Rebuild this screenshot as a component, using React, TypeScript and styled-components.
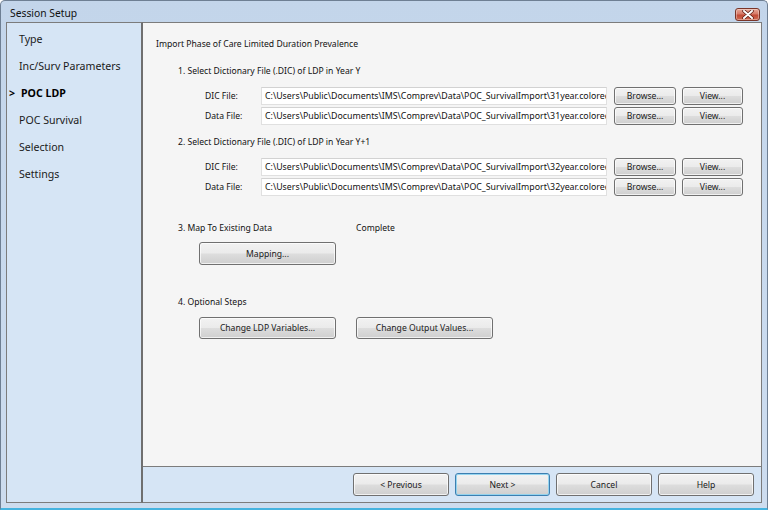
import React from "react";
import styled, { createGlobalStyle, css } from "styled-components";

const GlobalStyle = createGlobalStyle`
  html, body {
    margin: 0;
    padding: 0;
    overflow: hidden;
    background: #ffffff;
  }
  * {
    box-sizing: border-box;
  }
`;

const FONT = `"Noto Sans", "Open Sans", "DejaVu Sans", sans-serif`;

const navItems = [
  "Type",
  "Inc/Surv Parameters",
  "POC LDP",
  "POC Survival",
  "Selection",
  "Settings",
];

const yearY =
  "C:\\Users\\Public\\Documents\\IMS\\Comprev\\Data\\POC_SurvivalImport\\31year.colored";
const yearY1 =
  "C:\\Users\\Public\\Documents\\IMS\\Comprev\\Data\\POC_SurvivalImport\\32year.colored";

function FileRow({ label, value }: { label: string; value: string }) {
  return (
    <Row>
      <FieldLabel>{label}</FieldLabel>
      <PathBox>{value}</PathBox>
      <Button $w={62}>Browse...</Button>
      <Button $w={61}>View...</Button>
    </Row>
  );
}

function App() {
  return (
    <>
      <GlobalStyle />
      <Window>
        <TitleBar>
          <Title>Session Setup</Title>
          <CloseButton>
            <svg width="12" height="9" viewBox="0 0 12 9">
              <path
                d="M2 1 L10 8 M10 1 L2 8"
                stroke="#5a1a12"
                strokeWidth="3.4"
                strokeLinecap="round"
              />
              <path
                d="M2 1 L10 8 M10 1 L2 8"
                stroke="#ffffff"
                strokeWidth="2"
                strokeLinecap="round"
              />
            </svg>
          </CloseButton>
        </TitleBar>
        <Body>
          <Nav>
            {navItems.map((item) => (
              <NavItem key={item} $active={item === "POC LDP"}>
                {item === "POC LDP" && <Marker>&gt;</Marker>}
                {item}
              </NavItem>
            ))}
          </Nav>
          <Main>
            <Content>
              <Heading>Import Phase of Care Limited Duration Prevalence</Heading>

              <Step $top={14}>1. Select Dictionary File (.DIC) of LDP in Year Y</Step>
              <FileGroup>
                <FileRow label="DIC File:" value={yearY} />
                <FileRow label="Data File:" value={yearY} />
              </FileGroup>

              <Step $top={11}>2. Select Dictionary File (.DIC) of LDP in Year Y+1</Step>
              <FileGroup>
                <FileRow label="DIC File:" value={yearY1} />
                <FileRow label="Data File:" value={yearY1} />
              </FileGroup>

              <Step $top={26}>
                <StepName>3. Map To Existing Data</StepName>
                Complete
              </Step>
              <ActionRow $top={7}>
                <Button $w={137} $h={23}>
                  Mapping...
                </Button>
              </ActionRow>

              <Step $top={31}>4. Optional Steps</Step>
              <ActionRow $top={8}>
                <Button $w={137} $h={22}>
                  Change LDP Variables...
                </Button>
                <Button $w={137} $h={22}>
                  Change Output Values...
                </Button>
              </ActionRow>
            </Content>
            <Footer>
              <Button $w={96} $h={23}>&lt; Previous</Button>
              <Button $w={95} $h={23} $default>
                Next &gt;
              </Button>
              <Button $w={96} $h={23}>Cancel</Button>
              <Button $w={96} $h={23}>Help</Button>
            </Footer>
          </Main>
        </Body>
      </Window>
    </>
  );
}

export default App;

const Window = styled.div`
  width: 768px;
  height: 510px;
  display: flex;
  flex-direction: column;
  border: 1px solid #6e7f93;
  border-bottom: 2px solid #45b3df;
  border-radius: 5px 5px 0 0;
  background: linear-gradient(to bottom, #c3d5ea, #c9daee 60%, #cddcee);
  font-family: ${FONT};
  color: #000;
  overflow: hidden;
`;

const TitleBar = styled.div`
  height: 21px;
  flex: none;
  display: flex;
  align-items: center;
  justify-content: space-between;
  padding: 0 7px 0 9px;
`;

const Title = styled.span`
  font-size: 10.3px;
  color: #111;
  padding-top: 3px;
`;

const CloseButton = styled.div`
  width: 25px;
  height: 13px;
  margin-top: 5px;
  display: flex;
  align-items: center;
  justify-content: center;
  border: 1px solid #7a3528;
  border-radius: 3px;
  background: linear-gradient(to bottom, #e8a898 0%, #d67a68 45%, #c24a36 55%, #cf6a52 100%);
  box-shadow: inset 0 0 0 1px rgba(255, 255, 255, 0.35);
`;

const Body = styled.div`
  flex: 1;
  display: flex;
  padding: 0 5px 5px 5px;
  min-height: 0;
`;

const Nav = styled.div`
  width: 137px;
  flex: none;
  background: #d6e5f5;
  border: 1px solid #7c7c7c;
  border-right: 2px solid #6f6f6f;
  padding-top: 2px;
`;

const NavItem = styled.div<{ $active?: boolean }>`
  height: 27px;
  display: flex;
  align-items: center;
  padding-left: 12px;
  font-size: 10.6px;
  color: #1a1a1a;
  ${(p) =>
    p.$active &&
    css`
      padding-left: 2px;
      font-weight: 700;
      color: #000;
    `}
`;

const Marker = styled.span`
  display: inline-block;
  width: 12px;
  font-weight: 700;
`;

const Main = styled.div`
  flex: 1;
  display: flex;
  flex-direction: column;
  border-top: 1px solid #7c7c7c;
  border-right: 1px solid #7c7c7c;
  border-bottom: 1px solid #7c7c7c;
`;

const Content = styled.div`
  flex: 1;
  background: #f5f5f5;
  padding: 14px 0 0 13px;
  font-size: 8.6px;
  color: #111;
  border-bottom: 1px solid #7c7c7c;
`;

const Heading = styled.div`
  line-height: 14px;
`;

const Step = styled.div<{ $top: number }>`
  margin-top: ${(p) => p.$top}px;
  margin-left: 22px;
  line-height: 13px;
  display: flex;
`;

const StepName = styled.span`
  width: 178px;
`;

const FileGroup = styled.div`
  margin-top: 9px;
  margin-left: 49px;
  display: flex;
  flex-direction: column;
  gap: 2px;
`;

const Row = styled.div`
  display: flex;
  align-items: center;
  height: 18px;
`;

const FieldLabel = styled.span`
  width: 56px;
  flex: none;
`;

const PathBox = styled.div`
  width: 346px;
  height: 18px;
  flex: none;
  background: #ffffff;
  border: 1px solid #e0e0e0;
  border-top-color: #d2d2d2;
  padding: 0 0 0 3px;
  font-size: 8.8px;
  line-height: 16px;
  white-space: nowrap;
  overflow: hidden;
  margin-right: 7px;
`;

const Button = styled.div<{ $w: number; $h?: number; $default?: boolean }>`
  width: ${(p) => p.$w}px;
  height: ${(p) => p.$h ?? 18}px;
  flex: none;
  display: flex;
  align-items: center;
  justify-content: center;
  font-size: 8.6px;
  color: #1a1a1a;
  border: 1px solid ${(p) => (p.$default ? "#3c7fb1" : "#707070")};
  border-radius: 3px;
  background: linear-gradient(
    to bottom,
    #f2f2f2 0%,
    #ebebeb 48%,
    #dddddd 52%,
    #cfcfcf 100%
  );
  box-shadow: inset 0 0 0 1px
    ${(p) => (p.$default ? "rgba(140, 210, 240, 0.9)" : "rgba(255, 255, 255, 0.7)")};
  margin-right: 6px;
`;

const ActionRow = styled.div<{ $top: number }>`
  margin-top: ${(p) => p.$top}px;
  margin-left: 43px;
  display: flex;
  gap: 14px;
`;

const Footer = styled.div`
  height: 35px;
  flex: none;
  background: #d6e5f5;
  display: flex;
  align-items: flex-start;
  justify-content: flex-end;
  padding: 6px 1px 0 0;
`;
